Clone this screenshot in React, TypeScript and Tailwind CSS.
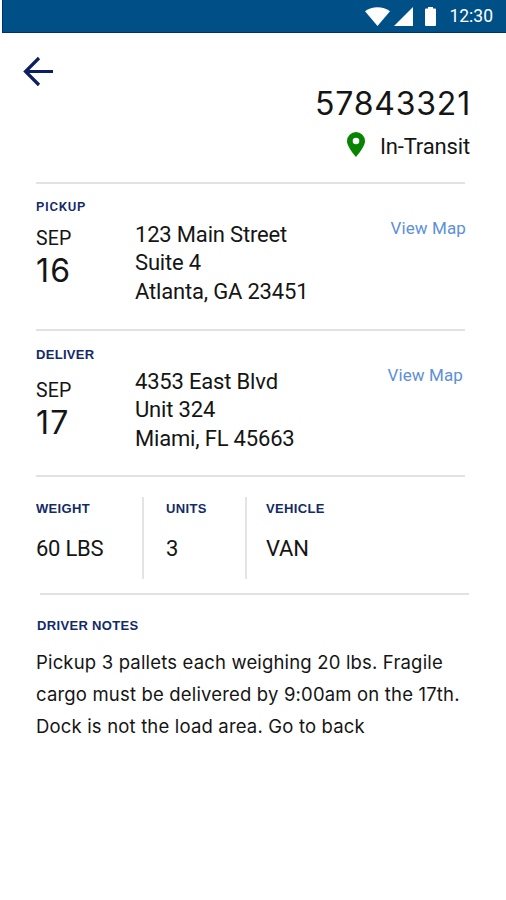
import { clsx } from "clsx";

interface StopProps {
  label: string;
  labelClass: string;
  day: string;
  address: string[];
  dateClass: string;
  linkClass: string;
  className: string;
}

const shipment = {
  id: "57843321",
  status: "In-Transit",
  notes: [
    "Pickup 3 pallets each weighing 20 lbs. Fragile",
    "cargo must be delivered by 9:00am on the 17th.",
    "Dock is not the load area. Go to back",
  ],
};

function StatusBar() {
  return (
    <div className="ml-0.5 flex h-[33px] items-center justify-end border-b border-l border-[#003074] bg-[#005088] pr-[13px] text-white">
      <svg className="h-[19px] w-[25px]" viewBox="0 0 25 19" fill="currentColor">
        <path d="M0 4.2C7-1 18-1 25 4.2L12.5 19Z" />
      </svg>
      <svg
        className="ml-1 h-[19px] w-[19px]"
        viewBox="0 0 19 19"
        fill="currentColor"
      >
        <path d="M19 0V19H0Z" />
      </svg>
      <svg
        className="ml-3 h-[19px] w-[11px]"
        viewBox="0 0 11 19"
        fill="currentColor"
      >
        <path d="M3 0H8V1.5H10Q11 1.5 11 2.5V18Q11 19 10 19H1Q0 19 0 18V2.5Q0 1.5 1 1.5H3Z" />
      </svg>
      <span className="ml-[13px] pt-px font-['Roboto',sans-serif] text-[17.5px] leading-none">
        12:30
      </span>
    </div>
  );
}

function Label({ children, className }: { children: string; className?: string }) {
  return (
    <h2
      className={clsx(
        "text-[13px] leading-4 whitespace-nowrap text-[#132a69]",
        className ?? "font-bold tracking-[0.33px]",
      )}
    >
      {children}
    </h2>
  );
}

function Stop({
  label,
  labelClass,
  day,
  address,
  dateClass,
  linkClass,
  className,
}: StopProps) {
  return (
    <section
      className={clsx(
        "mr-[41px] ml-9 flex border-t-2 border-[#e2e2e2]",
        className,
      )}
    >
      <div className="w-[99px] shrink-0">
        <Label className={labelClass}>{label}</Label>
        <div className={dateClass}>
          <p className="font-['Roboto',sans-serif] text-[19.5px] leading-6 tracking-[0.2px]">
            SEP
          </p>
          <p className="font-['Inter',sans-serif] text-[32px] leading-10 tracking-[1.2px]">
            {day}
          </p>
        </div>
      </div>
      <address className="pt-[37px] font-['Roboto',sans-serif] text-[22px] leading-[28.4px] tracking-[-0.18px] whitespace-nowrap not-italic">
        {address.map((line) => (
          <p key={line}>{line}</p>
        ))}
      </address>
      <a
        className={clsx(
          "ml-auto h-6 font-['Roboto',sans-serif] text-[17px] leading-6 tracking-[0.1px] whitespace-nowrap text-[#5e8fd8]",
          linkClass,
        )}
      >
        View Map
      </a>
    </section>
  );
}

export default function App() {
  return (
    <div className="h-[900px] w-[506px] overflow-hidden bg-white text-[#151515]">
      <StatusBar />

      <header className="h-[149px] pr-9">
        <svg
          className="ml-[23px] h-[54px] w-[31px] pt-[23px]"
          viewBox="0 0 31 31"
          fill="none"
          stroke="#0c1f62"
          strokeWidth="3.2"
        >
          <path d="M30 15.5H3M16 2L2.5 15.5L16 29" />
        </svg>
        <h1 className="-mt-[3px] -mr-px text-right font-['Inter',sans-serif] text-[32px] leading-10 font-normal tracking-[0.8px]">
          {shipment.id}
        </h1>
        <div className="flex h-11 items-center justify-end">
          <svg
            className="mr-[15px] mb-1 h-[25px] w-[18px]"
            viewBox="0 0 18 25"
            fill="#078500"
          >
            <path
              fillRule="evenodd"
              d="M9 0A9 9 0 0 0 0 9C0 15 9 25 9 25S18 15 18 9A9 9 0 0 0 9 0ZM9 5.7A3.3 3.3 0 1 1 9 12.3A3.3 3.3 0 1 1 9 5.7Z"
            />
          </svg>
          <p className="font-['Roboto',sans-serif] text-[22px] tracking-[-0.15px]">
            {shipment.status}
          </p>
        </div>
      </header>

      <Stop
        label="PICKUP"
        labelClass="pt-[15px] font-['Roboto',sans-serif] font-semibold tracking-[0.75px]"
        day="16"
        address={["123 Main Street", "Suite 4", "Atlanta, GA 23451"]}
        dateClass="pt-3"
        linkClass="mt-8 -mr-px"
        className="h-[147px]"
      />
      <Stop
        label="DELIVER"
        labelClass="pt-4 font-['Liberation_Sans',Arial,sans-serif] font-bold tracking-[0.3px]"
        day="17"
        address={["4353 East Blvd", "Unit 324", "Miami, FL 45663"]}
        dateClass="pt-4"
        linkClass="mt-8 mr-0.5"
        className="h-[146px]"
      />

      {/* Load details */}
      <section className="mr-[41px] ml-9 flex h-[118px] border-t-2 border-[#e2e2e2] pt-5 font-['Liberation_Sans',Arial,sans-serif]">
        <div className="h-[82px] w-[108px] border-r-2 border-[#e4e4e4] pt-1">
          <Label>WEIGHT</Label>
          <p className="pt-[18px] font-['Roboto',sans-serif] text-[22px] leading-7 tracking-[-0.25px]">
            60 LBS
          </p>
        </div>
        <div className="h-[82px] w-[103px] border-r-2 border-[#e4e4e4] pt-1 pl-[22px]">
          <Label>UNITS</Label>
          <p className="pt-[18px] font-['Roboto',sans-serif] text-[22px] leading-7">
            3
          </p>
        </div>
        <div className="pt-1 pl-[19px]">
          <Label>VEHICLE</Label>
          <p className="pt-[18px] font-['Roboto',sans-serif] text-[22px] leading-7 tracking-[-0.2px]">
            VAN
          </p>
        </div>
      </section>

      <section>
        <hr className="mr-[37px] ml-10 border-t-2 border-[#e2e2e2]" />
        <div className="pt-[23px] pl-9">
          <div className="pl-px font-['Liberation_Sans',Arial,sans-serif]">
            <Label>DRIVER NOTES</Label>
          </div>
          <div className="pt-[11.5px] font-['Inter',sans-serif] text-[18.5px] leading-[32.3px] tracking-[0.17px] whitespace-nowrap">
            {shipment.notes.map((line) => (
              <p key={line}>{line}</p>
            ))}
          </div>
        </div>
      </section>
    </div>
  );
}
